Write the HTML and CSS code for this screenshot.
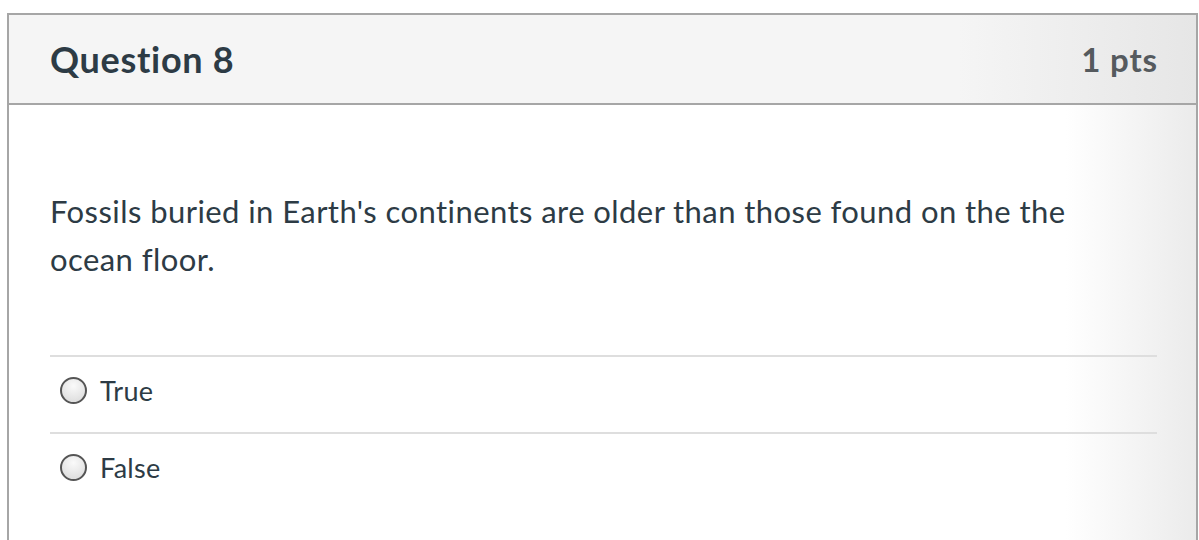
FILE: index.html
```html
<!DOCTYPE html>
<html>
<head>
<meta charset="utf-8">
<link rel="stylesheet" href="styles.css">
</head>
<body>
<div class="card">
  <div class="header">
    <h2 class="title">Question 8</h2>
    <span class="pts">1 pts</span>
  </div>
  <div class="content">
    <p class="question">Fossils buried in Earth's continents are older than those found on the the ocean floor.</p>
    <div class="answers">
      <div class="answer"><span class="radio"></span><span class="label">True</span></div>
      <div class="answer"><span class="radio"></span><span class="label">False</span></div>
    </div>
  </div>
</div>
</body>
</html>
```
FILE: styles.css
```css
html, body {
  margin: 0;
  background: #fff;
  font-family: Lato, "Liberation Sans", sans-serif;
}
.card {
  margin: 13px 0 0 7px;
  width: 1191px;
  height: 540px;
  box-sizing: border-box;
  border: 2px solid #a6a6a6;
  border-bottom: none;
  background: linear-gradient(to right, #fff 0%, #fff 89%, #ebebeb 100%);
}
.header {
  height: 90px;
  box-sizing: border-box;
  border-bottom: 2px solid #a6a6a6;
  background: linear-gradient(to right, #f5f5f5 0%, #f5f5f5 80%, #e6e6e6 100%);
  display: flex;
  align-items: center;
  justify-content: space-between;
  padding: 0 39px 0 41px;
}
.title {
  margin: 0;
  font-size: 36px;
  font-weight: 700;
  letter-spacing: 0.7px;
  color: #2d3b45;
}
.pts {
  font-size: 33px;
  font-weight: 700;
  letter-spacing: 0.8px;
  margin-right: -0.8px;
  color: #555a5e;
}
.content {
  padding: 82px 39px 0 41px;
}
.question {
  margin: 0;
  font-size: 31px;
  line-height: 48px;
  letter-spacing: 0.43px;
  color: #2d3b45;
  max-width: 1080px;
}
.answers {
  margin-top: 72px;
}
.answer {
  display: flex;
  align-items: center;
  height: 77px;
  box-sizing: border-box;
  padding-bottom: 8px;
  border-top: 2px solid #dedede;
  padding-left: 10px;
}
.radio {
  width: 23px;
  height: 23px;
  border: 2px solid #555;
  border-radius: 50%;
  background: radial-gradient(circle at 50% 30%, #fafafa, #d8d8d8);
  margin-right: 13px;
}
.label {
  font-size: 27px;
  letter-spacing: 0.3px;
  color: #2d3b45;
}
```
